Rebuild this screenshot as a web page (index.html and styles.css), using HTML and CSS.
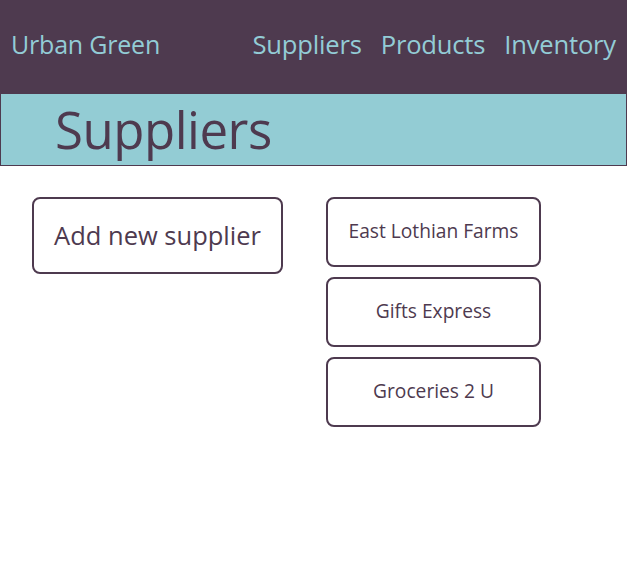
FILE: index.html
```html
<!DOCTYPE html>
<html>
<head>
<meta charset="utf-8">
<link rel="stylesheet" href="styles.css">
</head>
<body>
<header class="topbar">
  <div class="brand">Urban Green</div>
  <nav class="nav">
    <a class="nav-link">Suppliers</a>
    <a class="nav-link">Products</a>
    <a class="nav-link">Inventory</a>
  </nav>
</header>
<div class="title-band">
  <h1 class="page-title">Suppliers</h1>
</div>
<main class="content">
  <div class="add-col">
    <button class="add-btn">Add new supplier</button>
  </div>
  <div class="supplier-list">
    <button class="supplier">East Lothian Farms</button>
    <button class="supplier">Gifts Express</button>
    <button class="supplier">Groceries 2 U</button>
  </div>
</main>
</body>
</html>
```
FILE: styles.css
```css
* { box-sizing: border-box; }
body {
  margin: 0;
  font-family: "Open Sans", "Noto Sans", sans-serif;
  color: #4e3a4f;
  background: #fff;
}
.topbar {
  height: 94px;
  background: #4e3a4f;
  display: flex;
  align-items: center;
  justify-content: space-between;
  padding: 0 11px 6px 11px;
}
.brand, .nav-link {
  color: #93ccd6;
  font-size: 25px;
  font-weight: 500;
  font-family: "Open Sans", sans-serif;
  letter-spacing: -0.2px;
}
.nav-link { font-size: 25.6px; }
.nav { display: flex; gap: 19px; }
.title-band {
  background: #93ccd4;
  border: 1px solid #4e3a4f;
  border-top: none;
  height: 72px;
  padding-left: 54px;
}
.page-title {
  margin: 0;
  font-size: 51px;
  font-weight: 500;
  line-height: 70px;
  letter-spacing: -0.5px;
}
.content {
  display: flex;
  padding: 31px 0 0 32px;
  gap: 43px;
}
button {
  font-family: "Open Sans", sans-serif;
  font-weight: 500;
  color: #4e3a4f;
  background: #fff;
  border: 2px solid #4e3a4f;
  border-radius: 8px;
}
.add-btn {
  width: 251px;
  height: 77px;
  font-size: 25.5px;
  padding: 0 0 2px;
}
.supplier-list {
  display: flex;
  flex-direction: column;
  gap: 10px;
}
.supplier {
  width: 215px;
  height: 70px;
  font-size: 19.2px;
  padding: 0 0 4px;
}
```
